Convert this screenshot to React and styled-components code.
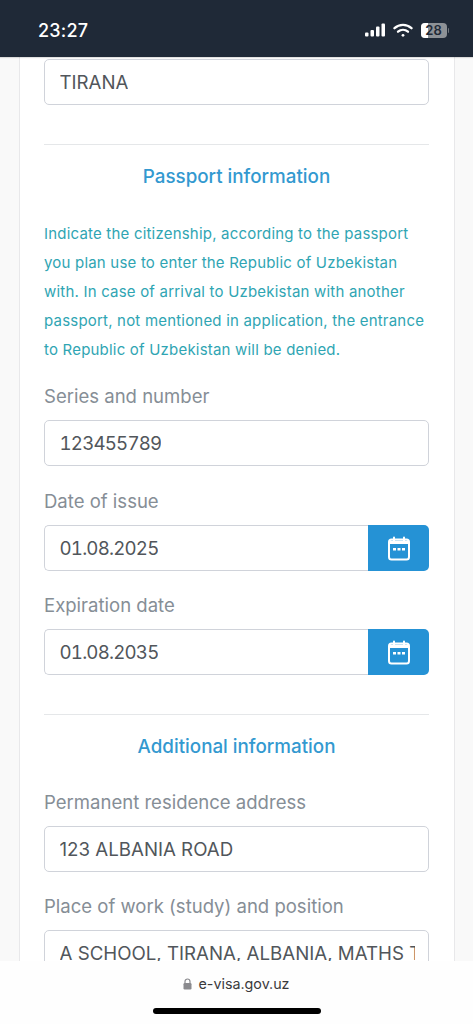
import React from "react";
import styled, { createGlobalStyle } from "styled-components";

const Global = createGlobalStyle`
  html, body { margin: 0; padding: 0; background: #f9f9f9; }
  * { box-sizing: border-box; }
`;
const Phone = styled.div`
  width: 473px; height: 1024px; display: flex; flex-direction: column; overflow: hidden;
  font-family: Inter, "Liberation Sans", sans-serif; background: #f9f9f9;
`;
const StatusBar = styled.header`
  height: 57px; flex: none; background: #1f2937; display: flex; align-items: center;
  justify-content: space-between; padding: 3px 24px 0 38px; color: #fff;
  box-shadow: 0 1px 1px rgba(0,0,0,.12); position: relative; z-index: 1;
`;
const Clock = styled.div`font-size: 18px; font-weight: 500; letter-spacing: .2px;`;
const StatusIcons = styled.div`display: flex; align-items: center; gap: 7px;`;
const Page = styled.main`flex: 1; min-height: 0; overflow: hidden;`;
const Card = styled.section`
  margin: 0 18.5px; background: #fff; border-left: 1px solid #e8e8ea; border-right: 1px solid #e8e8ea;
  padding: 2px 24.5px 0; min-height: 100%; display: flex; flex-direction: column;
`;
const Input = styled.div`
  height: 46px; flex: none; border: 1px solid #d0d3da; border-radius: 5px; background: #fff;
  display: flex; align-items: center; padding: 0 13px 0 15px; min-width: 0;
  ${p => p.$joined && "flex: 1; border-radius: 5px 0 0 5px; border-right: 0;"}
`;
const Value = styled.span`
  display: block; overflow: hidden; white-space: nowrap; color: #51565b; font-size: 18.7px; margin-left: -.5px;
  ${p => p.$numeric && "font-variant-numeric: tabular-nums; letter-spacing: -.8px;"}
`;
const Divider = styled.hr`
  width: 100%; flex: none; margin: ${p => p.$top}px 0 0; border: 0; border-top: 1px solid #e5e7e9;
`;
const Heading = styled.h2`
  margin: 20px 0 0; height: 24px; line-height: 24px; text-align: center; font-size: 18.8px; font-weight: 500; color: #3399d0;
`;
const Notice = styled.p`
  margin: 30px 0 0; font-size: 15px; letter-spacing: .2px; line-height: 29px; color: #2fa5b3; white-space: nowrap;
`;
const Label = styled.label`
  display: block; height: 24px; line-height: 24px; font-size: 18.55px; color: #868e96; margin: ${p => p.$top}px 0 12px;
`;
const DateRow = styled.div`display: flex; flex: none;`;
const CalendarBtn = styled.div`
  width: 61px; height: 46px; background: #2592d5; border-radius: 0 5px 5px 0; display: flex; align-items: center; justify-content: center;
`;
const Bottom = styled.footer`
  height: 63px; flex: none; background: #fefefe; position: relative; display: flex; justify-content: center; z-index: 1;
`;
const Url = styled.div`
  display: flex; align-items: center; gap: 6px; height: 46px; font-size: 14.3px; color: #3a3a3c; padding-bottom: 1px;
`;
const HomeBar = styled.div`
  position: absolute; left: 153px; top: 47px; width: 168px; height: 6px; border-radius: 3px; background: #000;
`;
const BatteryBox = styled.div`
  width: 26px; height: 15px; border-radius: 4px; background: #8d9196; position: relative; overflow: hidden;
  font-size: 13px; font-weight: 600; color: #1f2937; display: flex; align-items: center; justify-content: center;
`;
const BatteryFill = styled.span`position: absolute; left: 0; top: 0; bottom: 0; width: 7px; background: #fff;`;
const BatteryText = styled.span`position: relative;`;
const BatteryWrap = styled.div`display: flex; align-items: center; gap: 1px; margin-left: 1px;`;
const BatteryCap = styled.div`width: 1.5px; height: 5px; background: #6f757c; border-radius: 0 1px 1px 0;`;

const Calendar = () => (
  <svg width="24" height="25" viewBox="0 0 24 25" fill="none">
    <path d="M7 1.500v4M17 1.500v4" stroke="#fff" strokeWidth="2" strokeLinecap="round" />
    <rect x="2" y="3.500" width="20" height="20" rx="2.500" stroke="#fff" strokeWidth="2" />
    <path d="M2 4.500h20v3.500H2z" fill="#fff" />
    <path d="M6 12h3v2.500H6zM10.500 12h3v2.500h-3zM15 12h3v2.500h-3z" fill="#fff" />
  </svg>
);
const Signal = () => (
  <svg width="21" height="14" viewBox="0 0 21 14" fill="#fff">
    <rect x="0" y="9.500" width="3.500" height="4" rx="1" />
    <rect x="5.500" y="7" width="3.500" height="6.500" rx="1" />
    <rect x="11" y="3.500" width="3.500" height="10" rx="1" />
    <rect x="16.500" y="0.500" width="3.500" height="13" rx="1" />
  </svg>
);
const Wifi = () => (
  <svg width="20" height="15" viewBox="0 0 20 15" fill="none" stroke="#fff" strokeWidth="2.300" strokeLinecap="round">
    <path d="M1.500 5.200C6.300.8 13.700.8 18.500 5.200" />
    <path d="M5 8.700c2.900-2.500 7.100-2.500 10 0" />
    <circle cx="10" cy="12.300" r="1.400" fill="#fff" stroke="none" />
  </svg>
);
const Lock = () => (
  <svg width="9" height="12" viewBox="0 0 9 12" fill="none">
    <path d="M2 5.500V3.500a2.500 2.500 0 0 1 5 0v2" stroke="#8a8a8e" strokeWidth="1.200" />
    <rect x="0.500" y="5" width="8" height="6.500" rx="1.200" fill="#8a8a8e" />
  </svg>
);

export default function App() {
  return (
    <Phone>
      <Global />
      <StatusBar>
        <Clock>23:27</Clock>
        <StatusIcons>
          <Signal />
          <Wifi />
          <BatteryWrap>
            <BatteryBox>
              <BatteryFill />
              <BatteryText>28</BatteryText>
            </BatteryBox>
            <BatteryCap />
          </BatteryWrap>
        </StatusIcons>
      </StatusBar>
      <Page>
        <Card>
          <Input><Value>TIRANA</Value></Input>
          <Divider $top={39} />
          <Heading>Passport information</Heading>
          <Notice>
            Indicate the citizenship, according to the passport<br />
            you plan use to enter the Republic of Uzbekistan<br />
            with. In case of arrival to Uzbekistan with another<br />
            passport, not mentioned in application, the entrance<br />
            to Republic of Uzbekistan will be denied.
          </Notice>
          <Label $top={20}>Series and number</Label>
          <Input><Value $numeric>123455789</Value></Input>
          <Label $top={23}>Date of issue</Label>
          <DateRow>
            <Input $joined><Value $numeric>01.08.2025</Value></Input>
            <CalendarBtn><Calendar /></CalendarBtn>
          </DateRow>
          <Label $top={22}>Expiration date</Label>
          <DateRow>
            <Input $joined><Value $numeric>01.08.2035</Value></Input>
            <CalendarBtn><Calendar /></CalendarBtn>
          </DateRow>
          <Divider $top={39} />
          <Heading>Additional information</Heading>
          <Label $top={31}>Permanent residence address</Label>
          <Input><Value>123 ALBANIA ROAD</Value></Input>
          <Label $top={22}>Place of work (study) and position</Label>
          <Input><Value>A SCHOOL, TIRANA, ALBANIA, MATHS TEACHER</Value></Input>
        </Card>
      </Page>
      <Bottom>
        <Url><Lock />e-visa.gov.uz</Url>
        <HomeBar />
      </Bottom>
    </Phone>
  );
}
